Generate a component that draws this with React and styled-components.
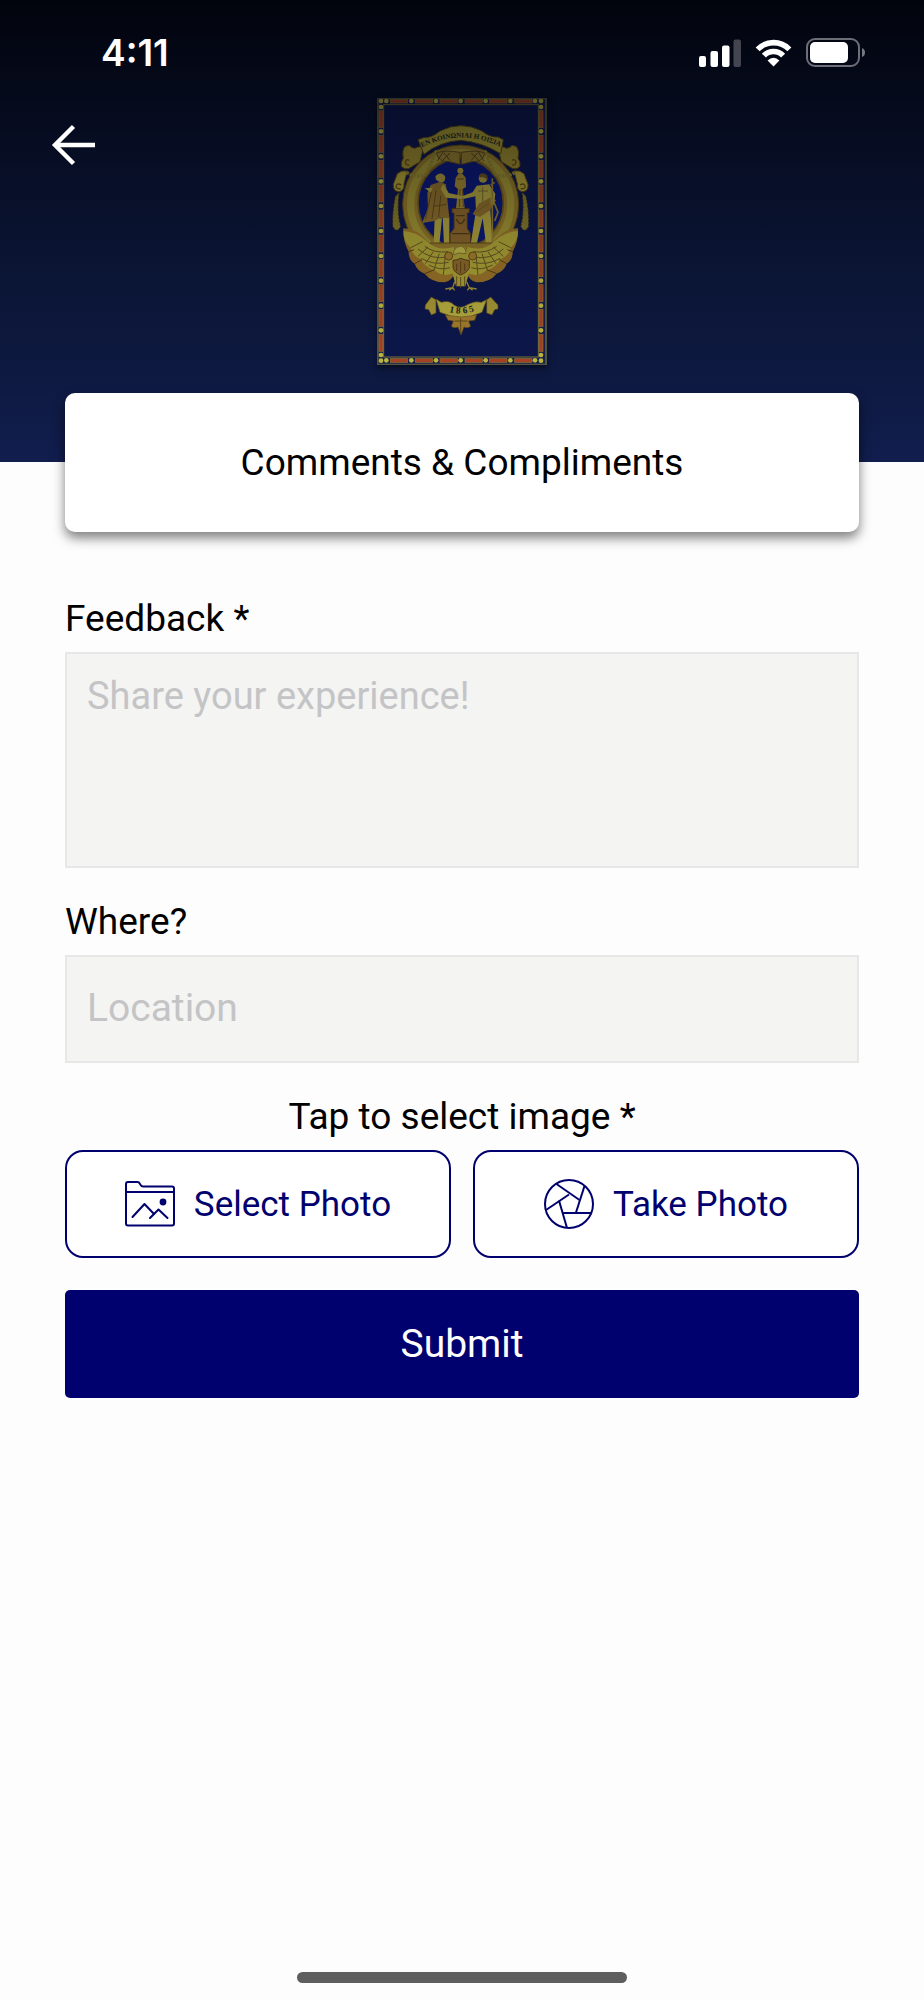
import React, { useState } from "react";
import styled, { createGlobalStyle } from "styled-components";

const GlobalStyle = createGlobalStyle`
  * {
    box-sizing: border-box;
  }

  body {
    margin: 0;
    background-color: #fdfdfd;
    font-family: Roboto, "Liberation Sans", sans-serif;
  }
`;

const Page = styled.div`
  display: flex;
  flex-direction: column;
  min-height: 100vh;
  color: #000;
`;

const Header = styled.header`
  background: linear-gradient(to bottom, #02040d 0%, #060c20 28%, #0b1535 60%, #111d4d 100%);
  color: #fff;
  padding-bottom: 97px;
`;

const StatusBar = styled.div`
  display: flex;
  align-items: center;
  justify-content: space-between;
  height: 98px;
  padding: 7px 59px 0 101px;
`;

const Time = styled.span`
  font-family: Inter, sans-serif;
  font-size: 37px;
  font-weight: 600;
  line-height: 44px;
`;

const StatusIcons = styled.div`
  display: flex;
  align-items: center;
  gap: 14px;
`;

const TopRow = styled.div`
  display: grid;
  grid-template-columns: 1fr auto 1fr;
  align-items: start;
`;

const BackButton = styled.button`
  justify-self: start;
  display: flex;
  background: none;
  border: none;
  color: #fff;
  padding: 23px 50px;
  cursor: pointer;
`;

const FlagFrame = styled.div`
  display: flex;
  box-shadow: 0 3px 6px rgba(0, 0, 0, 0.5);
`;

const TitleCard = styled.div`
  background-color: #fff;
  border-radius: 10px;
  box-shadow: 0 6px 12px rgba(0, 0, 0, 0.5);
  margin: -69px 65px 0;
  padding: 48px 20px 47px;
  text-align: center;
`;

const Title = styled.h1`
  margin: 0;
  font-size: 37px;
  font-weight: 400;
  line-height: 44px;
`;

const Form = styled.form`
  display: flex;
  flex-direction: column;
  gap: 32px;
  padding: 65px;
`;

const Field = styled.div`
  display: flex;
  flex-direction: column;
  gap: 11px;
`;

const Label = styled.label`
  font-size: 37px;
  line-height: 44px;
`;

const ImageLabel = styled.div`
  font-size: 37px;
  line-height: 44px;
  text-align: center;
`;

const TextArea = styled.textarea`
  display: block;
  width: 100%;
  height: 216px;
  padding: 19px 20px;
  background-color: #f4f4f2;
  border: 2px solid #e7e7e7;
  border-radius: 0;
  font-family: inherit;
  font-size: 38px;
  line-height: 46px;
  resize: none;
  outline: none;

  &::placeholder {
    color: #c4c4c6;
  }
`;

const TextInput = styled.input`
  width: 100%;
  height: 108px;
  padding: 0 20px 2px;
  background-color: #f4f4f2;
  border: 2px solid #e7e7e7;
  border-radius: 0;
  font-family: inherit;
  font-size: 39px;
  outline: none;

  &::placeholder {
    color: #c4c4c6;
  }
`;

const PhotoButtons = styled.div`
  display: grid;
  grid-template-columns: 1fr 1fr;
  gap: 22px;
`;

const PhotoButton = styled.button`
  display: flex;
  align-items: center;
  justify-content: center;
  gap: 19px;
  height: 108px;
  background-color: #fff;
  color: #00006e;
  border: 2px solid #00006e;
  border-radius: 18px;
  font-family: inherit;
  font-size: 35px;
  cursor: pointer;
`;

const SubmitButton = styled.button`
  height: 108px;
  background-color: #00006e;
  color: #fff;
  border: none;
  border-radius: 5px;
  font-family: inherit;
  font-size: 39px;
  cursor: pointer;
`;

const HomeIndicator = styled.div`
  align-self: center;
  width: 330px;
  height: 11px;
  margin-top: auto;
  margin-bottom: 17px;
  border-radius: 6px;
  background-color: #5e5e5e;
`;

function SignalIcon() {
  return (
    <svg width="42" height="28" viewBox="0 0 42 28" fill="#fff">
      <rect x="0" y="17" width="7" height="11" rx="2" />
      <rect x="11.5" y="12" width="7.5" height="16" rx="2" />
      <rect x="23" y="6.5" width="7.5" height="21.5" rx="2" />
      <rect x="34.5" y="0.5" width="7.5" height="27.5" rx="2" opacity="0.25" />
    </svg>
  );
}

function WifiIcon() {
  return (
    <svg width="37" height="28" viewBox="256 85 112 84" fill="none" stroke="#fff" strokeWidth="17">
      <path d="M264 116 A67 67 0 0 1 360 116" />
      <path d="M283 135 A40 40 0 0 1 341 135" />
      <path d="M312 168 L294 150 Q312 133 330 150 Z" fill="#fff" stroke="none" />
    </svg>
  );
}

function BatteryIcon() {
  return (
    <svg width="59" height="29" viewBox="0 0 59 29">
      <rect x="1" y="1" width="52" height="27" rx="8" fill="none" stroke="#fff" strokeOpacity="0.42" strokeWidth="2" />
      <rect x="4" y="4" width="38" height="21" rx="5" fill="#fff" />
      <path d="M56 10 Q59 11 59 14.500 Q59 18 56 19 Z" fill="#fff" fillOpacity="0.45" />
    </svg>
  );
}

function BackIcon() {
  return (
    <svg width="48" height="48" viewBox="0 0 48 48" fill="none" stroke="currentColor" strokeWidth="4.4">
      <path d="M45 24 H5" />
      <path d="M23.500 5.500 L5 24 L23.500 42.500" />
    </svg>
  );
}

function FolderImageIcon() {
  return (
    <svg width="50" height="50" viewBox="0 0 50 50" fill="none" stroke="currentColor" strokeWidth="2" strokeLinejoin="round" strokeLinecap="round">
      <path d="M1 5 Q1 3 3 3 H12.500 Q14 3 14.700 4.500 L16 6.500 Q16.500 7.400 18 7.400 H47 Q49 7.400 49 9.400 V44.500 Q49 46.500 47 46.500 H3 Q1 46.500 1 44.500 Z" />
      <path d="M1 13 H49" />
      <path d="M7.500 38 L19.500 25 L29 35" />
      <path d="M25 39 L33.500 30.500 L42.500 39" />
      <circle cx="38" cy="23" r="3.400" fill="currentColor" stroke="none" />
    </svg>
  );
}

function ApertureIcon() {
  return (
    <svg width="50" height="50" viewBox="0 0 50 50" fill="none" stroke="currentColor" strokeWidth="2">
      <circle cx="25" cy="25" r="24" />
      <path d="M12.500 5 L35.500 21" />
      <path d="M40.500 7 L32 33.500" />
      <path d="M47 34 H18.500" />
      <path d="M23 49 L15 21.500" />
      <path d="M2 31 L25 15.500" />
    </svg>
  );
}

const sideDots = [66, 139, 214, 289, 363, 438, 513, 587, 662, 736, 810, 827];
const sideBars = [77, 151, 226, 300, 375, 450, 524, 599, 673, 748];
const edgeDots = [79, 154, 228, 302, 377, 451, 525];
const edgeBars = [91, 166, 240, 315, 389, 464];

// right half of the wreath and scrolls, mirrored for the left half
function CrestHalf() {
  return (
    <g>
      <path d="M414 190 Q423 180 440 190 L452 186 Q451 178 468 184 Q479 194 474 220 Q482 230 480 244 Q466 258 450 246 L424 230 Z" fill="#97872b" stroke="#584313" strokeWidth="3" />
      <path d="M456 226 Q466 220 468 232 Q466 242 456 240" fill="none" stroke="#634b16" strokeWidth="4" />
      <path d="M462 258 Q480 254 492 266 L504 298 Q506 320 486 320 Q470 316 472 296 Z" fill="#a79a32" stroke="#5d4817" strokeWidth="3" />
      <path d="M480 300 Q494 292 496 306 Q492 314 482 310" fill="none" stroke="#634b16" strokeWidth="4" />
      <path d="M486 322 L498 334 Q508 380 506 424 Q494 448 482 424 Q494 380 486 322 Z" fill="#80752a" stroke="#302a18" strokeWidth="3" strokeDasharray="7 4" />
      <path d="M374 196 Q396 246 404 266 Q430 282 466 262" fill="none" stroke="#8b7f2d" strokeWidth="10" strokeDasharray="8 3" />
      <path d="M304 202 Q350 194 374 204 Q370 232 336 230 L304 238 Z" fill="#8f792b" stroke="#594516" strokeWidth="3" />
      <path d="M334 204 L356 226 M354 200 L372 228 M334 226 L352 204" stroke="#50401a" strokeWidth="3" />
    </g>
  );
}

function EagleWing() {
  return (
    <g>
      <path d="M322 484 Q374 500 400 470 Q434 430 474 430 Q476 468 458 500 Q458 526 440 536 Q434 556 410 566 Q390 592 350 592 Q328 588 318 560 Z" fill="#977127" />
      <path d="M322 486 Q370 500 402 470 Q434 440 474 438 Q474 470 452 488 Q446 514 422 522 Q408 548 380 556 Q354 580 318 562 Z" fill="#aaa034" />
      <path
        d="M340 500 Q380 506 410 484 M342 516 Q390 526 430 492 M338 532 Q384 542 420 520 M334 548 Q364 558 398 540 M416 470 L452 488 M400 486 L430 514 M384 500 L408 536 M366 506 L382 554 M348 510 L354 570"
        fill="none"
        stroke="#655320"
        strokeWidth="3"
      />
      <path d="M410 566 L380 554 M440 536 L418 524 M458 500 L442 494" stroke="#554111" strokeWidth="3" />
      <circle cx="338" cy="513" r="12" fill="#a27d2a" stroke="#654b19" strokeWidth="3" />
    </g>
  );
}

function Flag() {
  return (
    <svg width="170" height="267" viewBox="51 39 510 801" role="img" aria-label="Flag">
      <defs>
        <linearGradient id="shade" x1="0" y1="0" x2="0" y2="1">
          <stop offset="0" stopColor="#02040d" stopOpacity="0.5" />
          <stop offset="0.5" stopColor="#02040d" stopOpacity="0.18" />
          <stop offset="1" stopColor="#02040d" stopOpacity="0" />
        </linearGradient>
        <path id="bannerLine" d="M176 192 Q302 124 430 190" />
        <path id="yearLine" d="M258 678 Q304 694 352 676" />
      </defs>

      <rect x="51" y="39" width="510" height="801" fill="#55563f" />
      <rect x="56" y="43" width="499" height="793" fill="#182052" />
      <rect x="71" y="59" width="464" height="757" fill="#0c164a" stroke="#777135" strokeWidth="3" />

      {[48, 826].map((y) => (
        <g key={y}>
          {edgeBars.map((x) => (
            <rect key={x} x={x} y={y - 5} width="52" height="11" fill="#a54125" stroke="#8a7834" strokeWidth="2" />
          ))}
          {edgeDots.map((x) => (
            <circle key={x} cx={x} cy={y} r="7" fill="#bcb53d" />
          ))}
        </g>
      ))}
      {[63, 543].map((x) => (
        <g key={x}>
          {sideBars.map((y) => (
            <rect key={y} x={x - 6} y={y} width="12" height="51" fill="#a54125" stroke="#8a7834" strokeWidth="2" />
          ))}
          {[48, ...sideDots].map((y) => (
            <circle key={y} cx={x} cy={y} r="7" fill="#bcb53d" />
          ))}
        </g>
      ))}

      {/* oval */}
      <ellipse cx="302" cy="358" rx="174" ry="178" fill="#8e7428" stroke="#594914" strokeWidth="3" />
      <ellipse cx="302" cy="358" rx="150" ry="155" fill="none" stroke="#9c8f30" strokeWidth="22" />
      <ellipse cx="302" cy="354" rx="128" ry="134" fill="#0b1973" stroke="#6d561b" strokeWidth="5" />

      <CrestHalf />
      <g transform="translate(604 0) scale(-1 1)">
        <CrestHalf />
      </g>

      {/* motto */}
      <path d="M174 164 L190 158 Q214 160 240 138 Q302 106 366 138 Q390 158 414 156 L430 164 L422 206 Q366 172 302 166 Q238 170 192 208 Z" fill="#a0952f" stroke="#534414" strokeWidth="3" />
      <text fontFamily="Liberation Serif, serif" fontSize="21" fontWeight="700" fill="#20211b">
        <textPath href="#bannerLine" startOffset="50%" textAnchor="middle">EN KOINΩNIAI H OIΣIA</textPath>
      </text>

      {/* pedestal and the statue on it */}
      <path d="M276 370 H328 V384 H322 V430 L332 446 V475 H270 V446 L282 430 V384 H276 Z" fill="#876329" stroke="#4a3516" strokeWidth="3" />
      <path d="M289 392 H314 M289 402 Q302 430 314 402 M276 446 H328" fill="none" stroke="#4d3919" strokeWidth="4" />
      <circle cx="301" cy="257" r="9" fill="#a59733" />
      <path d="M296 266 H307 L317 278 L318 306 L308 312 L314 370 H288 L294 312 L284 304 L287 278 Z" fill="#9c832e" />
      <path d="M292 282 L312 282 M300 312 L298 366 M308 312 L310 366" stroke="#644b1b" strokeWidth="3" />

      {/* left figure */}
      <path d="M226 274 Q238 260 252 270 L256 276 Q256 292 243 294 L228 284 Z" fill="#a3923a" />
      <path d="M224 400 L221 478 H238 L246 400 Z M248 396 L252 478 H268 L268 396 Z" fill="#a99d3c" />
      <path d="M212 300 L240 290 L258 298 L262 342 L268 400 L240 398 L224 408 L186 414 L204 370 L202 324 Z" fill="#8b6c28" />
      <path d="M194 310 L218 308 L212 322 Z" fill="#a99d3c" />
      <path d="M250 296 L266 324 L310 334 L304 342 L258 338 L242 312 Z" fill="#a99d3c" />
      <path d="M214 322 L196 404 M228 316 L216 402 M242 332 L236 396 M220 364 L260 358" stroke="#5e481b" strokeWidth="3" />

      {/* right figure */}
      <circle cx="369" cy="280" r="13" fill="#a3923a" />
      <path d="M360 268 Q370 260 382 272 L382 284 Q370 272 358 278 Z" fill="#685020" />
      <path d="M350 302 L388 298 L396 316 L390 360 L398 478 H378 L368 400 L350 478 H332 L348 376 L346 334 L310 342 L306 334 L338 322 Z" fill="#a99d3c" />
      <path d="M338 388 L356 356 L394 336 L408 346 L390 376 L360 396 Z" fill="#8b6c28" />
      <path d="M388 300 L406 326 L402 360 L392 356 L392 328 Z" fill="#a99d3c" />
      <path d="M397 280 V478 M392 300 L404 292 M402 352 L414 382 L404 408" fill="none" stroke="#8f7a2d" strokeWidth="5" />
      <path d="M354 318 H384 M368 306 V350 M346 382 L386 356" stroke="#6e5c24" strokeWidth="2.5" />

      {/* eagle */}
      <path d="M208 474 H398 L388 500 H216 Z" fill="#8f762a" stroke="#5c4618" strokeWidth="3" />
      <EagleWing />
      <g transform="translate(604 0) scale(-1 1)">
        <EagleWing />
      </g>
      <path d="M280 500 Q288 482 304 482 Q322 486 324 512 L328 560 L316 604 H288 L276 560 Z" fill="#a99f34" />
      <path d="M281 498 Q290 482 304 484 Q318 488 318 506 L294 504 L282 510 Z" fill="#bab247" stroke="#685822" strokeWidth="2" />
      <path d="M279 526 Q290 526 302 520 Q316 526 328 526 V548 Q322 562 302 570 Q282 562 279 548 Z" fill="#8c6728" stroke="#543f19" strokeWidth="3" />
      <path d="M290 536 V558 M302 530 V564 M314 536 V558" stroke="#5c431b" strokeWidth="3" />
      <path d="M290 574 V604 M302 576 V608 M314 574 V604" stroke="#655320" strokeWidth="3" />
      <path d="M284 590 L278 608 L256 612 M278 608 L268 616 M278 608 L284 616 M320 590 L328 608 L350 612 M328 608 L338 616 M328 608 L322 616" fill="none" stroke="#9e8f34" strokeWidth="4" />

      {/* year ribbon */}
      <path d="M256 690 H350 L344 706 L326 708 L332 724 Q322 732 312 726 L303 750 L294 726 Q282 732 274 724 L280 708 L264 706 Z" fill="#a27c2c" stroke="#58421a" strokeWidth="2" />
      <path d="M302 700 V746 M284 708 H322" stroke="#604919" strokeWidth="3" />
      <path d="M196 660 L214 636 L228 644 L228 684 L214 690 L206 674 L195 672 Z M414 660 L392 636 L380 644 L380 684 L396 690 L404 674 L414 672 Z" fill="#a49534" stroke="#58421a" strokeWidth="2" />
      <path d="M228 642 L244 652 Q268 644 282 660 Q304 674 324 658 Q346 646 364 652 L380 644 L366 682 Q304 710 240 682 Z" fill="#b3aa3d" stroke="#625020" strokeWidth="2" />
      <text fontFamily="Liberation Serif, serif" fontSize="28" fontWeight="700" fill="#1c1d21">
        <textPath href="#yearLine" startOffset="50%" textAnchor="middle">1 8 6 5</textPath>
      </text>

      <rect x="51" y="39" width="510" height="801" fill="url(#shade)" />
    </svg>
  );
}

function App() {
  const [feedback, setFeedback] = useState("");
  const [location, setLocation] = useState("");

  const handleSubmit = (e) => {
    e.preventDefault();
  };

  return (
    <Page>
      <GlobalStyle />
      <Header>
        <StatusBar>
          <Time>4:11</Time>
          <StatusIcons>
            <SignalIcon />
            <WifiIcon />
            <BatteryIcon />
          </StatusIcons>
        </StatusBar>
        <TopRow>
          <BackButton type="button" aria-label="Back">
            <BackIcon />
          </BackButton>
          <FlagFrame>
            <Flag />
          </FlagFrame>
        </TopRow>
      </Header>

      <TitleCard>
        <Title>Comments &amp; Compliments</Title>
      </TitleCard>

      <Form onSubmit={handleSubmit}>
        <Field>
          <Label htmlFor="feedback">Feedback *</Label>
          <TextArea
            id="feedback"
            placeholder="Share your experience!"
            value={feedback}
            onChange={(e) => setFeedback(e.target.value)}
          />
        </Field>
        <Field>
          <Label htmlFor="location">Where?</Label>
          <TextInput
            id="location"
            type="text"
            placeholder="Location"
            value={location}
            onChange={(e) => setLocation(e.target.value)}
          />
        </Field>
        <Field role="group" aria-labelledby="image-label">
          <ImageLabel id="image-label">Tap to select image *</ImageLabel>
          <PhotoButtons>
            <PhotoButton type="button">
              <FolderImageIcon />
              Select Photo
            </PhotoButton>
            <PhotoButton type="button">
              <ApertureIcon />
              Take Photo
            </PhotoButton>
          </PhotoButtons>
        </Field>
        <SubmitButton type="submit">Submit</SubmitButton>
      </Form>

      <HomeIndicator />
    </Page>
  );
}

export default App;
